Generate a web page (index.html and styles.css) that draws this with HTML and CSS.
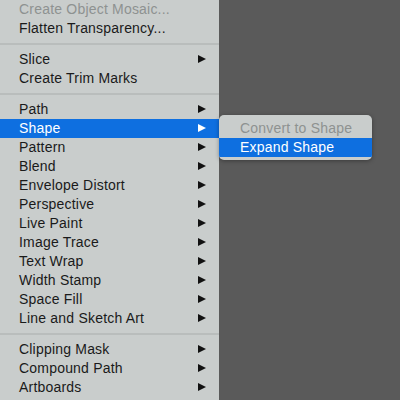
FILE: index.html
```html
<!DOCTYPE html>
<html lang="en">
<head>
    <meta charset="UTF-8">
    <title>Object Menu</title>
    <link rel="stylesheet" href="styles.css">
</head>
<body>

    <!-- Hauptmenue -->
    <div class="menu">
        <div class="item disabled">Create Object Mosaic...</div>
        <div class="item">Flatten Transparency...</div>
        <div class="separator"></div>
        <div class="item sub">Slice</div>
        <div class="item">Create Trim Marks</div>
        <div class="separator"></div>
        <div class="item sub">Path</div>
        <div class="item sub active">Shape</div>
        <div class="item sub">Pattern</div>
        <div class="item sub">Blend</div>
        <div class="item sub">Envelope Distort</div>
        <div class="item sub">Perspective</div>
        <div class="item sub">Live Paint</div>
        <div class="item sub">Image Trace</div>
        <div class="item sub">Text Wrap</div>
        <div class="item sub">Width Stamp</div>
        <div class="item sub">Space Fill</div>
        <div class="item sub">Line and Sketch Art</div>
        <div class="separator"></div>
        <div class="item sub">Clipping Mask</div>
        <div class="item sub">Compound Path</div>
        <div class="item sub">Artboards</div>
    </div>

    <!-- Untermenue Shape -->
    <div class="submenu">
        <div class="item disabled">Convert to Shape</div>
        <div class="item active">Expand Shape</div>
    </div>

</body>
</html>
```

FILE: styles.css
```css
body {
    margin: 0;
    padding: 0;
    width: 400px;
    height: 400px;
    overflow: hidden;
    background-color: #5a5a5a;
    font-family: 'Liberation Sans', Arial, sans-serif;
    font-size: 14px;
    letter-spacing: 0.2px;
    position: relative;
}
.menu {
    width: 219px;
    height: 400px;
    background-color: #c9cdcc;
    display: flex;
    flex-direction: column;
}
.item {
    height: 19px;
    line-height: 19px;
    padding-left: 19px;
    color: #1a1a1a;
    position: relative;
    white-space: nowrap;
}
.item.disabled {
    color: #8e9291;
}
.item.active {
    background-color: #0e6fe0;
    color: #ffffff;
}
.item.sub::after {
    content: '';
    position: absolute;
    left: 198px;
    top: 5px;
    border-left: 8px solid #111;
    border-top: 4.5px solid transparent;
    border-bottom: 4.5px solid transparent;
}
.item.sub.active::after {
    border-left-color: #ffffff;
}
.separator {
    height: 2px;
    margin: 5px 0;
    background-color: #b9bdbc;
}
.submenu {
    position: absolute;
    left: 219px;
    top: 115px;
    width: 153px;
    padding: 4px 0 3px;
    background-color: #c9cdcc;
    border-radius: 5px;
    box-shadow: 0 1px 4px rgba(0, 0, 0, 0.35);
    overflow: hidden;
}
.submenu .item {
    padding-left: 21px;
}
```
